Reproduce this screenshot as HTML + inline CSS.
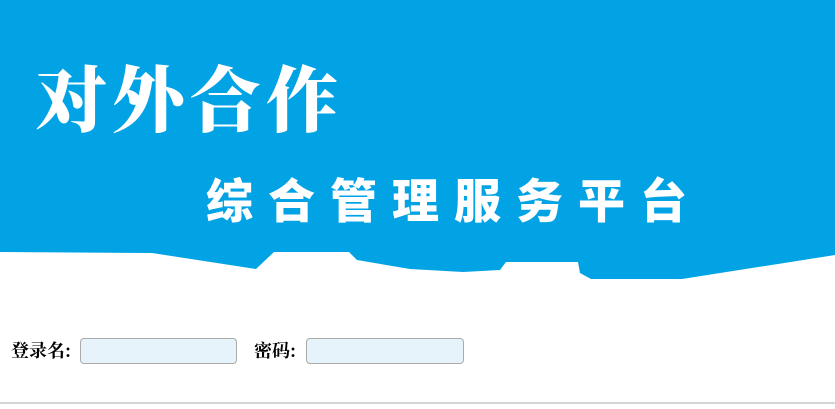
<!DOCTYPE html>
<html><head><meta charset="utf-8"><style>
html,body{margin:0;padding:0;width:835px;height:409px;overflow:hidden;background:#fff;position:relative;font-family:"Liberation Serif","Noto Serif CJK SC",serif}
svg.bg{position:absolute;left:0;top:0}
.t1{position:absolute;left:35px;top:50px;font:900 72px "Noto Serif CJK SC","WenQuanYi Zen Hei",serif;color:#fff;letter-spacing:5px;line-height:90px;white-space:nowrap}
.t2{position:absolute;left:206px;top:168px;font:900 47px "Noto Sans CJK SC",sans-serif;color:#fff;letter-spacing:15px;line-height:60px;white-space:nowrap}
.lbl{position:absolute;top:339px;font-size:18px;font-weight:bold;color:#000;font-family:"Noto Serif CJK SC",serif;line-height:22px;white-space:nowrap}
.inp{position:absolute;top:338px;width:157px;height:26px;border:1px solid #aaa;border-radius:4px;background:#e6f3fb;box-sizing:border-box}
.line{position:absolute;left:0;top:402px;width:835px;height:2px;background:#d4d4d4}
</style></head><body>
<svg class="bg" width="835" height="409"><polygon fill="#02a3e5" points="0,0 835,0 835,255 682,279 591,279 580,273 578,262 506,262 500,270 463,272 410,269 357,260 349,252 274,252 256,269 152,253 0,252"/></svg>
<div class="t1">对外合作</div>
<div class="t2">综合管理服务平台</div>
<div class="lbl" style="left:11px">登录名:</div>
<div class="inp" style="left:80px"></div>
<div class="lbl" style="left:254px">密码:</div>
<div class="inp" style="left:306px;width:158px"></div>
<div class="line"></div>
</body></html>
